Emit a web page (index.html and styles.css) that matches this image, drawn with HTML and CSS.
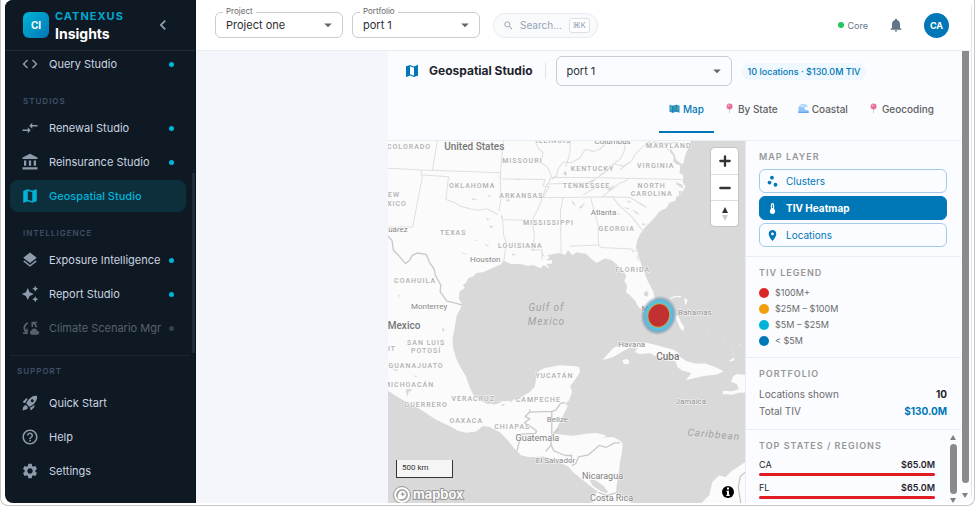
FILE: index.html
```html
<!DOCTYPE html>
<html lang="en">
<head>
<meta charset="utf-8">
<meta name="viewport" content="width=device-width, initial-scale=1">
<title>Geospatial Studio</title>
<link rel="stylesheet" href="styles.css">
</head>
<body>
<svg class="defs" aria-hidden="true">
  <symbol id="i-map" viewBox="0 0 24 24"><path d="M20.5 3l-.16.03L15 5.1 9 3 3.36 4.9c-.21.07-.36.25-.36.48V20.5c0 .28.22.5.5.5l.16-.03L9 18.9l6 2.1 5.64-1.9c.21-.07.36-.25.36-.48V3.5c0-.28-.22-.5-.5-.5zM15 19l-6-2.11V5l6 2.11V19z"/></symbol>
  <symbol id="i-drop" viewBox="0 0 24 24"><path d="M7 10l5 5 5-5z"/></symbol>
  <symbol id="i-pin" viewBox="0 0 24 24"><path fill="#c9ccd0" d="M11 13h2.4l-.5 10h-1.4z"/><circle cx="12.2" cy="7.5" r="6.5" fill="#ee6f96"/><circle cx="10.3" cy="5.4" r="2" fill="#f8abc2"/></symbol>
</svg>
<div class="window">
<div class="app">
  <aside class="sidebar">
    <div class="brand">
      <span class="logo">CI</span>
      <div class="brand-text"><span class="brand-top">CATNEXUS</span><span class="brand-name">Insights</span></div>
      <button class="collapse" aria-label="Collapse menu"><svg class="ic18" viewBox="0 0 24 24"><path d="M15.41 7.41L14 6l-6 6 6 6 1.41-1.41L10.83 12z"/></svg></button>
    </div>
    <nav class="nav">
      <a class="item" href="#"><svg viewBox="0 0 24 24"><path d="M9.4 16.6L4.8 12l4.6-4.6L8 6l-6 6 6 6 1.4-1.4zm5.2 0l4.6-4.6-4.6-4.6L16 6l6 6-6 6-1.4-1.4z"/></svg><span>Query Studio</span><i class="dot"></i></a>
      <h2>STUDIOS</h2>
      <a class="item" href="#"><svg viewBox="0 0 24 24"><path d="M9.01 14H2v2h7.01v3L13 15l-3.99-4v3zm5.98-1v-3H22V8h-7.01V5L11 9l3.99 4z"/></svg><span>Renewal Studio</span><i class="dot"></i></a>
      <a class="item" href="#"><svg viewBox="0 0 24 24"><path d="M4 10h3v7H4zM10.5 10h3v7h-3zM2 19h20v3H2zM17 10h3v7h-3zM12 1L2 6v2h20V6z"/></svg><span>Reinsurance Studio</span><i class="dot"></i></a>
      <a class="item active" href="#" aria-current="page"><svg><use href="#i-map"/></svg><span>Geospatial Studio</span></a>
      <h2>INTELLIGENCE</h2>
      <a class="item" href="#"><svg viewBox="0 0 24 24"><path d="M11.99 18.54l-7.37-5.73L3 14.07l9 7 9-7-1.63-1.27-7.38 5.74zM12 16l7.36-5.73L21 9l-9-7-9 7 1.63 1.27L12 16z"/></svg><span>Exposure Intelligence</span><i class="dot"></i></a>
      <a class="item" href="#"><svg viewBox="0 0 24 24"><path d="M19 9l1.25-2.75L23 5l-2.75-1.25L19 1l-1.25 2.75L15 5l2.75 1.25L19 9zm-7.5.5L9 4 6.5 9.5 1 12l5.5 2.5L9 20l2.5-5.5L17 12l-5.5-2.5zM19 15l-1.25 2.75L15 19l2.75 1.25L19 23l1.25-2.75L23 19l-2.75-1.25L19 15z"/></svg><span>Report Studio</span><i class="dot"></i></a>
      <a class="item disabled" href="#" aria-disabled="true"><svg viewBox="0 0 24 24"><path d="M9.5 4.2v2.2A6 6 0 0 0 7 15.600V13h2v7H2.500v-2H6A8 8 0 0 1 9.500 4.200zM14 3.500h7.500v2h-2.600A8 8 0 0 1 21.600 11h-2.200A6 6 0 0 0 16 6.800V10.500h-2zM22 15.500a3 3 0 0 0-.6 0 4 4 0 0 0-7.500-.5A3.200 3.200 0 0 0 14 21h7.500a2.800 2.800 0 0 0 .5-5.500z"/></svg><span>Climate Scenario Mgr</span><i class="dot"></i></a>
    </nav>
    <nav class="support">
      <h2>SUPPORT</h2>
      <a class="item" href="#"><svg viewBox="0 0 24 24"><path d="M9.190 6.350c-2.040 2.290-3.440 5.580-3.570 5.890L2 10.690l4.050-4.050c.47-.47 1.150-.68 1.810-.55l1.330.26zM11.170 17s3.740-1.550 5.890-3.700c5.400-5.400 4.500-9.620 4.210-10.570-.95-.3-5.170-1.190-10.570 4.210C8.550 9.090 7 12.830 7 12.830L11.170 17zm6.480-2.190c-2.290 2.040-5.580 3.440-5.890 3.570L13.310 22l4.050-4.050c.47-.47.68-1.150.55-1.810l-.26-1.330zM9 18c0 .83-.34 1.580-.88 2.120C6.940 21.300 2 22 2 22s.7-4.940 1.880-6.120C4.420 15.340 5.170 15 6 15c1.660 0 3 1.340 3 3zm4-9c0-1.100.9-2 2-2s2 .9 2 2-.9 2-2 2-2-.9-2-2z"/></svg><span>Quick Start</span></a>
      <a class="item" href="#"><svg viewBox="0 0 24 24"><path d="M11 18h2v-2h-2v2zm1-16C6.480 2 2 6.480 2 12s4.480 10 10 10 10-4.480 10-10S17.520 2 12 2zm0 18c-4.410 0-8-3.590-8-8s3.590-8 8-8 8 3.590 8 8-3.590 8-8 8zm0-14c-2.210 0-4 1.790-4 4h2c0-1.100.9-2 2-2s2 .9 2 2c0 2-3 1.750-3 5h2c0-2.250 3-2.500 3-5 0-2.210-1.790-4-4-4z"/></svg><span>Help</span></a>
      <a class="item" href="#"><svg viewBox="0 0 24 24"><path d="M19.140 12.940c.04-.3.06-.61.06-.94 0-.32-.02-.64-.07-.94l2.030-1.580c.18-.14.23-.41.12-.61l-1.920-3.320c-.12-.22-.37-.29-.59-.22l-2.390.96c-.5-.38-1.030-.7-1.620-.94l-.36-2.540c-.04-.24-.24-.41-.48-.41h-3.840c-.24 0-.43.17-.47.41l-.36 2.540c-.59.24-1.130.57-1.620.94l-2.390-.96c-.22-.08-.47 0-.59.22L2.740 8.870c-.12.21-.08.47.12.61l2.030 1.580c-.05.3-.09.63-.09.94s.02.64.07.94l-2.030 1.580c-.18.14-.23.41-.12.61l1.920 3.320c.12.22.37.29.59.22l2.390-.96c.5.38 1.030.7 1.620.94l.36 2.540c.05.24.24.41.48.41h3.840c.24 0 .44-.17.47-.41l.36-2.540c.59-.24 1.130-.56 1.620-.94l2.390.96c.22.08.47 0 .59-.22l1.920-3.320c.12-.22.07-.47-.12-.61l-2.010-1.580zM12 15.600c-1.980 0-3.600-1.620-3.600-3.600s1.620-3.600 3.600-3.600 3.600 1.620 3.600 3.600-1.620 3.600-3.600 3.600z"/></svg><span>Settings</span></a>
    </nav>
    <div class="side-thumb"></div>
  </aside>

  <div class="main">
    <header class="topbar">
      <div class="field">
        <label for="project">Project</label>
        <select id="project"><option>Project one</option></select>
        <svg class="arrow"><use href="#i-drop"/></svg>
      </div>
      <div class="field">
        <label for="portfolio">Portfolio</label>
        <select id="portfolio"><option>port 1</option></select>
        <svg class="arrow"><use href="#i-drop"/></svg>
      </div>
      <label class="search">
        <svg viewBox="0 0 24 24"><path d="M15.500 14h-.79l-.28-.27C15.410 12.590 16 11.110 16 9.500 16 5.910 13.090 3 9.500 3S3 5.910 3 9.500 5.910 16 9.500 16c1.610 0 3.090-.59 4.230-1.570l.27.28v.79l5 4.990L20.490 19l-4.990-5zm-6 0C7.010 14 5 11.990 5 9.500S7.010 5 9.500 5 14 7.010 14 9.500 11.990 14 9.500 14z"/></svg>
        <input type="text" placeholder="Search..." aria-label="Search">
        <kbd>⌘K</kbd>
      </label>
      <div class="user">
        <span class="plan">Core</span>
        <button class="bell" aria-label="Notifications"><svg viewBox="0 0 24 24"><path d="M12 22c1.100 0 2-.9 2-2h-4c0 1.100.89 2 2 2zm6-6v-5c0-3.070-1.640-5.640-4.500-6.320V4c0-.83-.67-1.500-1.500-1.500s-1.500.67-1.500 1.500v.68C7.630 5.360 6 7.920 6 11v5l-2 2v1h16v-1l-2-2z"/></svg></button>
        <button class="avatar">CA</button>
      </div>
    </header>

    <div class="body">
      <div class="gutter"></div>
      <main class="studio">
        <div class="studio-head">
          <svg class="head-icon"><use href="#i-map"/></svg>
          <h1>Geospatial Studio</h1>
          <div class="port">
            <select aria-label="Studio portfolio"><option>port 1</option></select>
            <svg class="arrow"><use href="#i-drop"/></svg>
          </div>
          <span class="chip">10 locations · $130.0M TIV</span>
        </div>
        <div class="tabs" role="tablist">
          <button class="tab on" role="tab" aria-selected="true"><svg viewBox="0 0 24 24"><path fill="#2f8fd0" d="M1 4l7 2 8-2 7 2v15l-7-2-8 2-7-2z"/><path fill="#43b39b" d="M3 7l4 1 2 4-4 5-2-1zM12 8l4-1 5 2-1 5-4 3-3-4z"/><path fill="#17679e" d="M7.500 6h1.500v15H7.500zM15 4h1.500v15H15z"/></svg>Map</button>
          <button class="tab" role="tab"><svg><use href="#i-pin"/></svg>By State</button>
          <button class="tab" role="tab"><svg viewBox="0 0 24 24"><path fill="#8fc4fa" d="M1 22V13C1 6 6 2 12 2c5 0 9 3 9 7-2-2-6-2-7 1s1 6 9 6v6z"/><path fill="#d4eafd" d="M3 9c2-5 10-8 16-3-5-1-8 0-8 5-2-3-5-4-8-2z"/><path fill="#64a4ee" d="M1 18c6 2 12 2 22 0v4H1z"/></svg>Coastal</button>
          <button class="tab" role="tab"><svg><use href="#i-pin"/></svg>Geocoding</button>
        </div>
        <div class="work">
          <div class="map">
            <svg class="canvas" viewBox="0 1 358 361" preserveAspectRatio="xMinYMin slice" role="img" aria-label="Heatmap of insured value around the Gulf of Mexico">
              <defs><radialGradient id="heat"><stop offset="0" stop-color="#c23132"/><stop offset=".54" stop-color="#c23132"/><stop offset=".59" stop-color="#c9a045"/><stop offset=".64" stop-color="#5cc3d6"/><stop offset=".73" stop-color="#56bfe4"/><stop offset=".83" stop-color="#5b93b4" stop-opacity=".65"/><stop offset="1" stop-color="#7c8ba0" stop-opacity="0"/></radialGradient></defs>
              <g transform="translate(-2 -2) scale(.3333)">
                <g class="land">
                  <path d="M0 0H915L905 30 896 48 890 75 880 86 878 104 890 112 887 130 896 146 884 166 868 178 866 188 848 194 838 210 818 220 802 240 776 266 760 288 751 308 748 325 756 355 770 395 784 430 800 460 807 490 800 518 785 530 770 515 755 506 745 486 728 468 718 462 722 442 713 428 719 412 708 395 690 378 675 366 655 360 645 366 630 373 615 362 598 346 570 342 557 350 545 335 536 350 520 344 505 346 482 351 490 358 478 366 498 366 496 376 480 376 490 392 472 380 462 390 440 380 425 382 400 376 375 378 350 366 345 378 320 388 290 402 270 404 262 414 246 420 240 432 230 440 236 448 220 460 218 480 228 500 212 530 205 570 199 600 201 630 210 660 225 690 240 715 250 745 262 770 280 785 305 797 340 788 370 787 400 778 430 760 445 745 450 715 457 697 475 688 520 680 560 682 578 685 580 700 565 725 551 742 557 760 548 785 536 795 544 802 530 830 520 850 510 870 498 885 530 888 560 891 600 885 630 883 660 890 650 896 680 895 700 905 708 915 706 940 700 970 697 1000 690 1040 688 1062 700 1072 730 1088 740 1100H620L616 1068 636 1060 610 1040 585 1020 560 1000 548 985 510 965 470 953 430 955 405 950 385 930 365 905 340 880 310 865 290 862 270 878 240 882 215 876 190 862 150 843 100 810 70 795 40 778 0 752z"/>
                  <path d="M648 664L665 645 680 628 710 616 750 612 780 613 820 622 860 635 880 655 900 668 925 675 955 675 985 685 1010 698 990 708 950 712 915 720 897 725 914 704 885 695 872 685 866 668 840 665 810 655 790 643 760 647 745 640 752 630 730 627 705 640 680 655 655 663z"/>
                  <path d="M709 664l12-3 8 7-5 8-9 1-6-6z"/>
                  <path d="M1040 712l10-6 30 3v52l-25 1-18 6-30-2 2-10 25 2 22-6-6-15-18-8z"/>
                  <path d="M940 1096l28-28 8-38 20-20 20 4 18-18 22-14 22-14v128z"/>
                  <path d="M866 530l10 5 8 20 8 8-2 16-10-10-10-24zM850 478l14-5 20-1-2 5-16-1-14 6zM893 478l9 7-4 14-4-4zM906 513l6 5-2 6-4-6zM1025 667l12-7 6-4-2 10-12 3zM832 1092l30-1 12 5h-40zM842 628l20 6 18 12-3 2-18-10-16-6z"/>
                  <path d="M962 573l8 5-2 1zM1004 604l10 5-2 1zM985 635l3 3h-3zM1036 628l3 2-1 4zM1058 618l6 2-5 2zM1040 645l4 3h-4z"/>
                </g>
                <g class="water">
                  <path d="M608 1022l18 2 24 16 14 18-4 6-22-10-20-14zM772 462l8-5 6 8-4 10-10-4zM312 795l22-8 14 3-24 8zM344 800l12-6-4 8zM372 784l8 2-6 6zM401 782l16 2-12 3zM17 690l20 4-8 4zM80 709l16 6-10-1zM58 754l6 20 4-14 12-8-12-2zM36 468l5 2-3 10zM168 568l7 4-2 8-5-5zM232 776l14 14-8-4zM850 30l14 20 8 30-4-2-10-26-8-10zM860 60l28 20-6 4-22-12zM868 132l18 8 4 12-20-12zM875 158l14 2-12 10z"/>
                  <path d="M256 180l18 4-14 2zM306 172l10 0-12 6zM362 182l12 6-14 2zM392 121l12 4-12 1zM300 240l12 4-10 2zM308 262l14 2-8 6zM294 315l16 10-10-2zM262 303l12 4-6 1zM225 342l20 6-14-2zM430 330l16 8-8 0zM464 342l14 14-12-6zM376 345l14 4-10 3zM556 185l14 20-12-8zM576 210l12-10 8-10-10 20zM530 106l6-8 6 8-4 8zM604 132l30-14-16 14zM660 154l26-14-16 18zM712 206l18 6-8 1zM736 214l16 8 6 10-14-10zM766 254l12 4-10 4zM690 225l14 4-10 1zM720 188l16 2-10 4z"/>
                </g>
                <g class="states">
                  <path d="M154 6L139 96M0 90l110 6 234 8M107 96l-2 14 82 6-8 68 24 8 20 12 28 8 22 4 30-4 26 14 6 4M110 110L80 266H0M352 6l-8 76-2 40 134 2M342 122l2 60-6 38M344 232l4 12 78 2M348 232l4 60 8 20-8 60M476 124l-6 20 18 2-18 32h-20M492 118l-2 10-12 20-12 36-14 34-14 26 6 50-6 40 30 2-2 30M480 138l138-4M495 118h110l280 6M470 178h70l130-2 60 2 50 30M530 178l-8 40 2 128M612 178l22 80 2 62 8 8 92 4 2 8 10-4M550 324l84-4M645 178l16-14 20-14 14-12 30-14M676 174l20 26 40 36 32 42 4 6M446 6l10 26 14 12-6 30 20 14 14 34 12-8 4-20 16-22 24 2 26-14 16-26 24 6 20-6 12-12 6-14M500 120l10-8M552 6l-2 40-12 40M652 6l2 16-16 12M680 78l-28 28-24 14M716 6l-2 30-12 26-22 16 30 6 20-10 20-30 20-20 20-14M800 6l10 14 24 6 14 12M775 14h100M340 120l3-14"/>
                  <path d="M750 330l6 14-4 14 4 10M590 170l30-18 16-14M640 110l22-12 14-18M700 95l30-24M778 206l-20-10"/>
                </g>
                <g class="nations">
                  <path d="M0 288l18 18 4 30 18 18 18 22 14-12 6-12 16-8 26 4 10 24 14 20 4 20 16 28-2 20 20 28 26 6 20 6"/>
                  <path d="M416 834l14 6-16 12 12 6 24 18-2 8-44 2-12 50M416 834l14-14 66-2v68M430 812v10M496 818l12-4 14-20 14-2M516 870l-22 22v26l-16 20M494 918l8 18 34 14 20 0-4 20M556 980l12-6 8-20 30-6 32-28 20 6 26-14 16 0M636 1060l24 10 28-8M1080 995l-20 18-6 30 8 53"/>
                </g>
              </g>
              <g class="lbl state">
                <text x="21" y="9">COLORADO</text><text x="134" y="23">MISSOURI</text><text x="165" y="3">ILLINOIS</text><text x="204" y="31">KENTUCKY</text><text x="280" y="8">MARYLAND</text><text x="267" y="28">VIRGINIA</text>
                <text x="84" y="48">OKLAHOMA</text><text x="133" y="58">ARKANSAS</text><text x="198" y="48">TENNESSEE</text><text x="263" y="48">NORTH</text><text x="263" y="56">CAROLINA</text>
                <text x="6" y="57">EW</text><text x="9" y="66">XICO</text><text x="65" y="95">TEXAS</text><text x="160" y="85">MISSISSIPPI</text><text x="228" y="91">GEORGIA</text><text x="132" y="108">LOUISIANA</text><text x="244" y="132">FLORIDA</text>
                <text x="27" y="143">COAHUILA</text><text x="38" y="204">SAN LUIS</text><text x="38" y="212">POTOSÍ</text><text x="4" y="210">IT</text><text x="28" y="227">GUANAJUATO</text><text x="21" y="246">MICHOACÁN</text><text x="38" y="266">GUERRERO</text><text x="85" y="260">VERACRUZ</text><text x="78" y="282">OAXACA</text><text x="124" y="288">CHIAPAS</text><text x="150" y="261">CAMPECHE</text><text x="166" y="237">YUCATÁN</text>
              </g>
              <g class="lbl city">
                <text x="224" y="4">Columbus</text><text x="215" y="75">Atlanta</text><text x="97" y="122">Houston</text><text x="10" y="92">uárez</text><text x="41" y="169">Monterrey</text><text x="264" y="171">Miami</text><text x="306" y="175">Bahamas</text><text x="243" y="206">Havana</text><text x="302" y="263">Jamaica</text><text x="169" y="281">Belize</text><text x="167" y="322">El Salvador</text>
              </g>
              <g class="lbl mid"><text x="149" y="300">Guatemala</text><text x="214" y="338">Nicaragua</text><text x="223" y="360">Costa Rica</text></g>
              <g class="lbl country"><text x="86" y="10">United States</text><text x="16" y="188">Mexico</text><text x="279" y="219">Cuba</text></g>
              <g class="sea"><text x="158" y="171">Gulf of</text><text x="158" y="185">Mexico</text><text x="325" y="297" transform="rotate(5 325 293)">Caribbean</text></g>
              <ellipse cx="270" cy="175" rx="18" ry="20" fill="url(#heat)" transform="rotate(20 270 175)"/>
            </svg>
            <div class="zoomer">
              <button aria-label="Zoom in"><svg viewBox="0 0 12 12"><path d="M6 2v8M2 6h8"/></svg></button>
              <button aria-label="Zoom out"><svg viewBox="0 0 12 12"><path d="M2 6h8"/></svg></button>
              <button aria-label="Reset north"><svg class="compass" viewBox="0 0 12 18"><path d="M6 2l3 6H3z"/><path class="south" d="M6 16l3-6H3z"/></svg></button>
            </div>
            <div class="scale">500 km</div>
            <a class="mapbox" href="#"><svg class="mb-mark" viewBox="0 0 18 18"><circle cx="9" cy="9" r="7" fill="#aaa" stroke="#fff" stroke-width="2"/><circle cx="9" cy="9" r="8.500" fill="none" stroke="#999"/><path fill="#fff" d="M5 13c-.5-3 0-6 2-7.500a4 4 0 0 1 5.500 5.500C11 13 8 13.500 5 13z"/><path fill="#999" d="M9.700 5.800l.8 1.700 1.700.8-1.700.8-.8 1.700-.8-1.700-1.700-.8 1.700-.8z"/></svg><svg class="mb-word" viewBox="0 0 56 18"><text x="2" y="13">mapbox</text></svg></a>
            <button class="info" aria-label="Attribution"><svg viewBox="0 0 14 14"><circle cx="7" cy="7" r="6"/><path fill="#fff" d="M6 2.500h2v2H6zM5.500 5.800H8v4h.7V11H5.300V9.800H6V7h-.5z"/></svg></button>
          </div>

          <aside class="panel">
            <section>
              <h3>MAP LAYER</h3>
              <div class="layers">
                <button><svg viewBox="0 0 24 24"><circle cx="6.500" cy="14" r="3.500"/><circle cx="11" cy="5" r="3.500"/><circle cx="17.500" cy="18" r="3.500"/></svg>Clusters</button>
                <button class="on"><svg viewBox="0 0 24 24"><path d="M15 13V5c0-1.660-1.340-3-3-3S9 3.340 9 5v8c-1.210.91-2 2.370-2 4 0 2.760 2.240 5 5 5s5-2.240 5-5c0-1.630-.79-3.090-2-4zm-4-8c0-.55.45-1 1-1s1 .45 1 1h-1v1h1v2h-1v1h1v2h-2V5z"/></svg>TIV Heatmap</button>
                <button><svg viewBox="0 0 24 24"><path d="M12 2C8.130 2 5 5.130 5 9c0 5.250 7 13 7 13s7-7.750 7-13c0-3.870-3.130-7-7-7zm0 9.500c-1.380 0-2.500-1.120-2.500-2.500s1.120-2.500 2.500-2.500 2.500 1.120 2.500 2.500-1.120 2.500-2.500 2.500z"/></svg>Locations</button>
              </div>
            </section>
            <section>
              <h3>TIV LEGEND</h3>
              <ul class="legend"><li class="c-red">$100M+</li><li class="c-amber">$25M – $100M</li><li class="c-cyan">$5M – $25M</li><li class="c-blue">&lt; $5M</li></ul>
            </section>
            <section>
              <h3>PORTFOLIO</h3>
              <dl><div><dt>Locations shown</dt><dd>10</dd></div><div><dt>Total TIV</dt><dd class="blue">$130.0M</dd></div></dl>
            </section>
            <section class="top">
              <div class="top-list">
                <h3>TOP STATES / REGIONS</h3>
                <div class="region"><span>CA</span><b>$65.0M</b><i></i></div>
                <div class="region"><span>FL</span><b>$65.0M</b><i></i></div>
              </div>
              <div class="bar" aria-hidden="true"><i class="up"></i><i class="thumb"></i><i class="down"></i></div>
            </section>
          </aside>
        </div>
      </main>
      <div class="bar page" aria-hidden="true"><i class="thumb"></i><i class="down"></i></div>
    </div>
  </div>
</div>
</div>
</body>
</html>
```
FILE: styles.css
```css
* { box-sizing: border-box; }
body { margin: 0; background: #fff; font-family: Inter, "Liberation Sans", sans-serif; color: #1f2329; }
button, select, input { font: inherit; color: inherit; margin: 0; }
button { border: 0; padding: 0; background: none; }
h1, h2, h3, ul, dl, dd { margin: 0; padding: 0; }
svg { display: block; fill: currentColor; flex: none; }
.defs { position: absolute; width: 0; height: 0; }

.window { height: 100vh; display: flex; padding: 0 2px 2px 4px; border: 1px solid #c6c6c8; border-top: 0; border-radius: 0 0 8px 8px; }
.app { flex: 1; min-width: 0; display: flex; border-radius: 8px; overflow: hidden; }

/* Sidebar */
.sidebar { position: relative; width: 191px; flex: none; display: flex; flex-direction: column; background: #0f1923; color: #cbd5e1; border-right: 1px solid #0b131b; }
.brand { position: relative; z-index: 1; height: 51px; flex: none; display: flex; align-items: center; gap: 6px; padding: 0 22px 0 18px; background: #0f1923; border-bottom: 1px solid #202b36; }
.logo { width: 26px; height: 26px; border-radius: 6px; background: linear-gradient(135deg, #00b4d8, #0077b6); color: #fff; font-size: 10px; font-weight: 700; line-height: 26px; text-align: center; }
.brand-text { flex: 1; display: flex; flex-direction: column; }
.brand-top { font-size: 11px; line-height: 17px; font-weight: 700; letter-spacing: 1px; color: #00a8d0; }
.brand-name { font-size: 14px; line-height: 18px; font-weight: 700; color: #fff; }
.collapse { color: #94a3b8; }
.ic18 { width: 20px; height: 20px; }
.nav { flex: 1; min-height: 0; overflow: hidden; padding: 0 9px 0 5px; display: flex; flex-direction: column; gap: 2px; }
.nav .item:first-child { margin-top: -3px; }
.item { height: 32px; flex: none; display: flex; align-items: center; gap: 10px; padding: 0 12px 0 11px; border-radius: 8px; color: #cbd5e1; font-size: 11px; text-decoration: none; white-space: nowrap; }
.item svg { width: 18px; height: 18px; color: #8d9bad; }
.item span { flex: 1; }
.dot { width: 5px; height: 5px; border-radius: 50%; background: #00b4d8; flex: none; }
.nav .item { gap: 10px; }
.item .dot { margin-left: -6px; }
.sidebar h2 { font-size: 8px; line-height: 14px; font-weight: 600; letter-spacing: 1px; color: #3f5068; }
.nav h2 { padding: 12px 0 2px 13px; }
.item.active { background: #0d2f3c; color: #00b4d8; font-weight: 500; }
.item.active svg { color: #00b4d8; }
.item.disabled, .item.disabled svg { color: #56616d; }
.item.disabled .dot { background: #34414e; }
.support { flex: none; margin: 0 5px; padding: 8px 0 16px; border-top: 1px solid #1b2631; display: flex; flex-direction: column; gap: 2px; }
.support h2 { padding: 0 0 7px 7px; }
.side-thumb { position: absolute; right: 0; top: 173px; bottom: 150px; width: 3px; background: #1e2b3a; }

/* Top bar */
.main { flex: 1; min-width: 0; display: flex; flex-direction: column; border-right: 1px solid #e3e5e9; }
.topbar { height: 51px; flex: none; display: flex; align-items: center; gap: 9px; padding: 0 22px 0 19px; border-bottom: 1px solid #e8ecf3; background: #fff; }
.field { position: relative; flex: 0 1 128px; }
.field label { position: absolute; left: 8px; top: -6px; padding: 0 3px; background: #fff; font-size: 8px; line-height: 10px; color: #666; }
select { appearance: none; width: 100%; border: 1px solid #c9ccd0; border-radius: 6px; background: transparent; }
.field select { height: 26px; padding: 0 24px 0 10px; font-size: 11px; color: #2a2e33; }
.arrow { position: absolute; right: 6px; top: 50%; width: 18px; height: 18px; margin-top: -9px; color: #666; pointer-events: none; }
.search { flex: 0 1 105px; margin-left: 4px; height: 25px; display: flex; align-items: center; gap: 6px; padding: 0 7px 0 9px; border: 1px solid #e6ebf2; border-radius: 12px; background: #f8fafc; color: #94a3b8; }
.search svg { width: 11px; height: 11px; }
.search input { flex: 1; min-width: 0; width: 0; margin-right: -5px; padding: 0; border: 0; background: none; font-size: 10px; outline: 0; }
.search input::placeholder { color: #94a3b8; }
kbd { padding: 0 3px; border: 1px solid #dbe1e9; border-radius: 3px; background: #fff; font: 8px/13px Inter, "DejaVu Sans", sans-serif; }
.user { margin-left: auto; display: flex; align-items: center; gap: 20px; }
.plan { display: flex; align-items: center; gap: 4px; font-size: 9px; color: #64748b; }
.plan::before { content: ""; width: 6px; height: 6px; border-radius: 50%; background: #22c55e; }
.bell { color: #64748b; }
.bell svg { width: 16px; height: 16px; }
.avatar { width: 25px; height: 25px; border-radius: 50%; background: #0077b6; color: #fff; font-size: 9px; font-weight: 700; }

/* Studio */
.body { flex: 1; min-height: 0; display: flex; background: #fafcff; }
.gutter { flex: 0 0 192px; background: #f4f6fb; }
.studio { flex: 1; min-width: 0; display: flex; flex-direction: column; }
.studio-head { display: flex; align-items: center; padding: 5px 16px 0; }
.head-icon { width: 16px; height: 16px; color: #0077b6; }
h1 { margin-left: 9px; padding-right: 12px; font-size: 12px; line-height: 16px; font-weight: 700; border-right: 1px solid #e1e5ea; white-space: nowrap; }
.port { position: relative; flex: 0 1 176px; margin-left: 10px; }
.port select { height: 30px; padding: 0 24px 0 10px; font-size: 11px; color: #2a2e33; }
.chip { margin-left: 10px; padding: 0 6px; border-radius: 8px; background: #eff8ff; color: #0077b6; font-size: 9px; line-height: 17px; font-weight: 500; white-space: nowrap; }
.tabs { height: 55px; display: flex; justify-content: flex-end; padding: 0 17px 7px; border-bottom: 1px solid #e8ecf3; }
.tab { display: flex; align-items: center; gap: 3px; padding: 0 10px; font-size: 10px; font-weight: 500; color: #616161; border-bottom: 2px solid transparent; white-space: nowrap; }
.tab svg { width: 11px; height: 11px; }
.tab.on { color: #0077b6; border-color: #0077b6; }
.work { flex: 1; min-height: 0; display: flex; }

/* Map */
.map { position: relative; flex: 1; min-width: 0; overflow: hidden; background: #d9d9d9; }
.canvas { width: 100%; height: 100%; }
.land { fill: #fbfbfb; }
.water { fill: #d9d9d9; }
.states { fill: none; stroke: #dfdfdf; stroke-width: 3; }
.nations { fill: none; stroke: #c9c9c9; stroke-width: 4; stroke-linejoin: round; }
.lbl text { font-family: Roboto, sans-serif; text-anchor: middle; paint-order: stroke; stroke: #fbfbfb; stroke-width: 1px; }
.state text { font-size: 7px; letter-spacing: 1px; font-weight: 500; fill: #b0b0b0; }
.city text { font-size: 8px; fill: #8a8a8a; }
.mid text { font-size: 9px; fill: #808080; }
.country text { font-size: 10px; font-weight: 500; fill: #777; }
.sea text { font: italic 10px Roboto, sans-serif; letter-spacing: 1px; fill: #a2a2a2; text-anchor: middle; }
.zoomer { position: absolute; right: 7px; top: 7px; width: 27px; border-radius: 4px; background: #fff; box-shadow: 0 0 0 1px #c4c4c4; }
.zoomer button { width: 100%; height: 26px; display: flex; align-items: center; justify-content: center; }
.zoomer button + button { border-top: 1px solid #ddd; }
.zoomer svg { width: 14px; height: 14px; stroke: #333; stroke-width: 2; stroke-linecap: round; }
.zoomer .compass { width: 12px; height: 18px; stroke: none; fill: #333; }
.zoomer .south { fill: #ccc; }
.scale { position: absolute; left: 8px; bottom: 25px; width: 57px; height: 18px; padding: 0 5px; border: 1px solid #333; border-top: 0; background: #f5f5f5; color: #333; font: 8px/16px Roboto, sans-serif; }
.mapbox { position: absolute; left: 5px; bottom: -1px; display: flex; align-items: center; }
.mb-mark { width: 18px; height: 18px; }
.mb-word { width: 56px; height: 18px; }
.mb-word text { font: 600 13px Inter, sans-serif; fill: #fff; stroke: #999; stroke-width: 2px; paint-order: stroke; }
.info { position: absolute; right: 10px; bottom: 4px; color: #000; }
.info svg { width: 14px; height: 14px; }

/* Side panel */
.panel { flex: 0 0 216px; display: flex; flex-direction: column; overflow: hidden; border-left: 1px solid #e8ecf3; }
section { flex: none; padding: 10px 14px 9px 13px; border-bottom: 1px solid #e8ecf3; }
h3 { margin-bottom: 6px; font-size: 9px; line-height: 12px; font-weight: 600; letter-spacing: 1px; color: #979797; }
.layers { display: flex; flex-direction: column; gap: 3px; }
.layers button { height: 24px; display: flex; align-items: center; gap: 7px; padding: 0 6px; border: 1px solid #a3cbe2; border-radius: 6px; color: #0077b6; font-size: 10px; }
.layers svg { width: 13px; height: 13px; }
.layers .on { background: #0077b6; border-color: #0077b6; color: #fff; font-weight: 700; }
.legend { display: flex; flex-direction: column; gap: 1px; list-style: none; }
.legend li { display: flex; align-items: center; gap: 6px; font-size: 9px; line-height: 15px; color: #6b6b6b; }
.legend li::before { content: ""; width: 10px; height: 10px; border-radius: 50%; background: currentColor; }
.legend .c-red::before { background: #dc2626; }
.legend .c-amber::before { background: #f59e0b; }
.legend .c-cyan::before { background: #00b4d8; }
.legend .c-blue::before { background: #0077b6; }
dl div { display: flex; justify-content: space-between; font-size: 10px; line-height: 17px; color: #6b6b6b; }
dd { font-weight: 700; color: #1f2329; }
dd.blue { color: #0077b6; }
.top { flex: 1; min-height: 0; display: flex; padding: 0 2px 0 13px; border-bottom: 0; overflow: hidden; }
.top-list { flex: 1; padding-top: 10px; }
.region { display: grid; grid-template-columns: 1fr auto; row-gap: 1px; margin-bottom: 5px; font-size: 9px; line-height: 14px; }
.region b { font-weight: 600; }
.region i { grid-column: 1 / 3; height: 3px; border-radius: 2px; background: #e11d24; }

/* Scroll bars */
.bar { flex: none; width: 12px; margin-left: 12px; display: flex; flex-direction: column; align-items: center; gap: 4px; padding: 5px 0 0; }
.bar .thumb { flex: 1; width: 7px; border-radius: 4px; background: #8a8a8a; }
.bar .up, .bar .down { border: 3px solid transparent; }
.bar .up { border-top: 0; border-bottom: 5px solid #808080; }
.bar .down { border-bottom: 0; border-top: 5px solid #808080; }
.bar.page { width: 10px; margin: 0; padding: 0 2px 5px 0; gap: 10px; }
.page .thumb { border-radius: 0 0 4px 4px; }
```
